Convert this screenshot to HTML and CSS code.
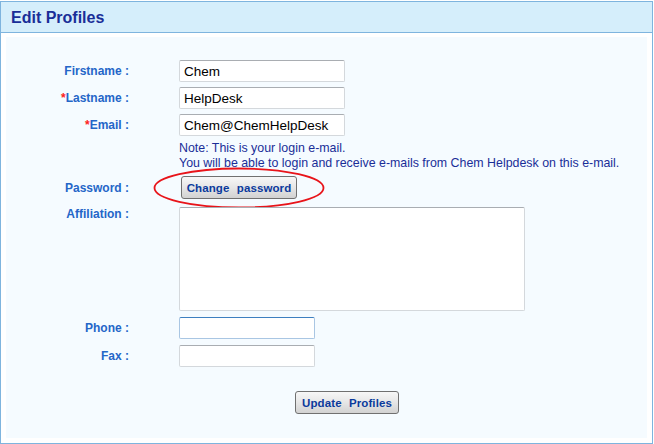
FILE: index.html
```html
<!DOCTYPE html>
<html lang="en">
<head>
  <meta charset="UTF-8" />
  <title>Edit Profiles</title>
  <link rel="stylesheet" href="styles.css">
</head>
<body>
  <div class="box">
    <div class="box-header">Edit Profiles</div>
    <div class="box-body">
      <div class="panel">
        <div class="row">
          <label class="lbl">Firstname :</label>
          <input class="txt" type="text" value="Chem">
        </div>
        <div class="row">
          <label class="lbl"><span class="req">*</span>Lastname :</label>
          <input class="txt" type="text" value="HelpDesk">
        </div>
        <div class="row">
          <label class="lbl"><span class="req">*</span>Email :</label>
          <input class="txt" type="text" value="Chem@ChemHelpDesk">
        </div>
        <div class="note">
          Note: This is your login e-mail.<br>
          You will be able to login and receive e-mails from Chem Helpdesk on this e-mail.
        </div>
        <div class="row row-pass">
          <label class="lbl">Password :</label>
          <button class="btn btn-change">Change password</button>
          <!-- red circle drawn over the button -->
          <svg class="mark" width="172" height="42" viewBox="0 0 172 42">
            <ellipse cx="86" cy="21" rx="84.5" ry="19.5" fill="none" stroke="#e8141a" stroke-width="1.8"/>
          </svg>
        </div>
        <div class="row row-top">
          <label class="lbl">Affiliation :</label>
          <textarea class="area"></textarea>
        </div>
        <div class="row row-phone">
          <label class="lbl">Phone :</label>
          <input class="txt short focus" type="text">
        </div>
        <div class="row">
          <label class="lbl">Fax :</label>
          <input class="txt short" type="text">
        </div>
        <div class="actions">
          <button class="btn btn-update">Update Profiles</button>
        </div>
      </div>
    </div>
  </div>
</body>
</html>
```

FILE: styles.css
```css
body {
  margin: 0;
  padding-top: 1px;
  background: #fff;
  font-family: "Liberation Sans", Arial, sans-serif;
}

/* Outer frame */
.box {
  width: 653px;
  height: 443px;
  box-sizing: border-box;
  border: 1px solid #7eb4de;
  display: flex;
  flex-direction: column;
}

.box-header {
  height: 30px;
  background-color: #d5eefb;
  border-bottom: 1px solid #7eb4de;
  color: #1a2e98;
  font-size: 16px;
  font-weight: bold;
  line-height: 31px;
  padding-left: 10px;
}

.box-body {
  flex: 1;
  padding: 4px 5px 5px 5px;
  background: #fff;
  display: flex;
}

.panel {
  flex: 1;
  background-color: #f5fbff;
  padding-top: 23px;
}

/* Form rows */
.row {
  display: flex;
  align-items: center;
  margin-bottom: 5px;
  position: relative;
}

.row-top {
  align-items: flex-start;
  margin-top: 8px;
  margin-bottom: 6px;
}

.row-top .lbl {
  padding-top: 0;
}

.row-phone {
  margin-bottom: 6px;
}

.lbl {
  width: 123px;
  margin-right: 50px;
  text-align: right;
  color: #2466c8;
  font-size: 12px;
  font-weight: bold;
}

.req {
  color: #ff2020;
}

.txt {
  box-sizing: border-box;
  width: 166px;
  height: 22px;
  margin: 0;
  padding: 0 4px;
  border: 1px solid #d4d8dc;
  border-top-color: #a9adb2;
  border-radius: 2px;
  background: #fff;
  font-family: "Liberation Sans", Arial, sans-serif;
  font-size: 13.5px;
  color: #000;
}

.txt.short {
  width: 136px;
}

.txt.focus {
  border-color: #a9c6e3;
  border-top-color: #3d7fc0;
}

.area {
  box-sizing: border-box;
  width: 346px;
  height: 104px;
  margin: 0;
  border: 1px solid #d4d8dc;
  border-top-color: #a9adb2;
  border-radius: 2px;
  background: #fff;
  resize: none;
}

.note {
  margin: 0 0 5px 173px;
  color: #1a2e98;
  font-size: 12.4px;
  line-height: 15px;
}

/* Buttons */
.btn {
  box-sizing: border-box;
  height: 23px;
  padding: 0;
  border: 1px solid #707070;
  border-radius: 3px;
  background: linear-gradient(#f7f7f7, #e6e6e6 50%, #d2d2d2);
  color: #0b3a9c;
  font-family: "Liberation Sans", Arial, sans-serif;
  font-size: 11.5px;
  font-weight: bold;
  letter-spacing: 0.1px;
  word-spacing: 4px;
  cursor: pointer;
}

.btn-change {
  width: 116px;
  margin-left: 2px;
}

.btn-update {
  width: 104px;
}

.row-pass {
  margin-top: 5px;
}

.mark {
  position: absolute;
  left: 147px;
  top: -9px;
  pointer-events: none;
}

.actions {
  padding: 19px 0 0 289px;
}
```
